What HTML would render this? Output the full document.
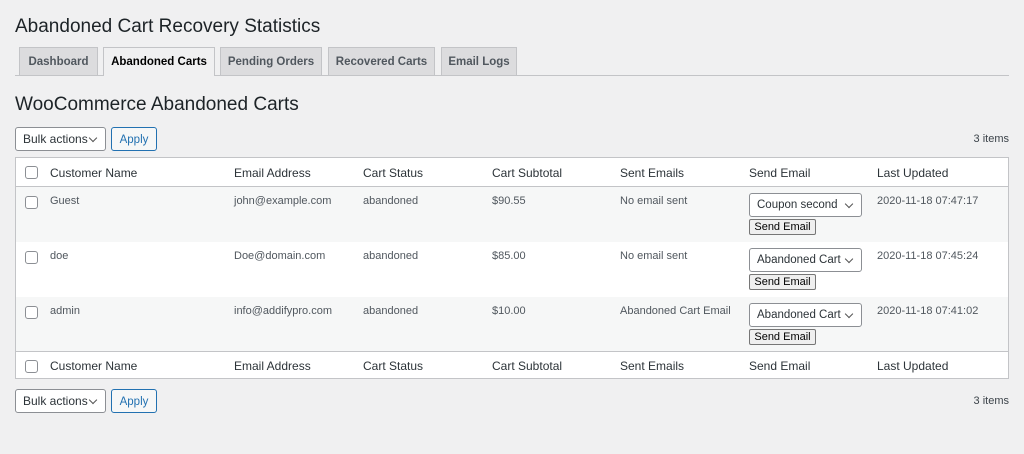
<!DOCTYPE html>
<html><head><style>
*{box-sizing:border-box;margin:0;padding:0}
body{width:1024px;height:454px;background:#f0f0f1;font-family:"Liberation Sans",sans-serif;color:#3c434a;position:relative;overflow:hidden}
.a{position:absolute;white-space:nowrap}
h1{position:absolute;left:15px;top:16px;font-size:19px;font-weight:400;color:#1d2327}
h2{position:absolute;left:15px;top:94px;font-size:19px;font-weight:400;color:#1d2327}
.tabline{position:absolute;left:15px;right:15px;top:75px;border-top:1px solid #c3c4c7}
.tab{position:absolute;top:47px;height:28px;background:#dcdcde;border:1px solid #c3c4c7;border-bottom:none;font-size:11.5px;font-weight:700;color:#50575e;line-height:28px;text-align:center}
.tab.on{background:#f0f0f1;color:#000;height:29px}
.sel{position:absolute;height:24px;background:#fff;border:1px solid #8c8f94;border-radius:3px;font-size:12px;color:#2c3338;line-height:22px;padding-left:7px}
.sel:after{content:"";position:absolute;right:9px;top:7px;width:5px;height:5px;border-right:1.3px solid #555;border-bottom:1.3px solid #555;transform:rotate(45deg)}
.btn{position:absolute;height:24px;border:1px solid #2271b1;border-radius:3px;background:#f6f7f7;color:#2271b1;font-size:11.5px;line-height:24px;text-align:center}
.items{position:absolute;right:15px;font-size:11px;color:#3c434a}
.tbl{position:absolute;left:15px;top:157px;width:994px;height:222px;border:1px solid #c3c4c7;background:#fff}
.row{position:absolute;left:0;width:992px}
.g{background:#f6f7f7}
.hd{border-bottom:1px solid #c3c4c7}
.ft{border-top:1px solid #c3c4c7}
.cb{position:absolute;left:9px;width:13px;height:13px;border:1px solid #8c8f94;border-radius:3px;background:#fff}
.h{font-size:12px;color:#2c3338}
.c{font-size:11px;color:#50575e}
.ss{position:absolute;left:733px;width:113px;height:24px;background:#fff;border:1px solid #8c8f94;border-radius:3px;font-size:11.5px;color:#2c3338;line-height:22px;padding-left:7px}
.ss:after{content:"";position:absolute;right:9px;top:7px;width:5px;height:5px;border-right:1.3px solid #555;border-bottom:1.3px solid #555;transform:rotate(45deg)}
.sb{position:absolute;left:733px;width:67px;height:16px;background:#efefef;border:1px solid #767676;border-radius:2px;font-size:11px;color:#000;line-height:14px;text-align:center}
</style></head><body>
<h1>Abandoned Cart Recovery Statistics</h1>
<div class="tabline"></div>
<div class="tab" style="left:19px;width:79px">Dashboard</div>
<div class="tab on" style="left:103px;width:112px">Abandoned Carts</div>
<div class="tab" style="left:220px;width:102px">Pending Orders</div>
<div class="tab" style="left:328px;width:107px">Recovered Carts</div>
<div class="tab" style="left:441px;width:76px">Email Logs</div>
<h2>WooCommerce Abandoned Carts</h2>
<div class="sel" style="left:15px;top:127px;width:91px">Bulk actions</div>
<div class="btn" style="left:111px;top:127px;width:46px">Apply</div>
<div class="items" style="top:133px">3 items</div>
<div class="tbl">
 <div class="row hd" style="top:0;height:29px">
  <div class="cb" style="top:8px"></div>
  <div class="a h" style="left:34px;top:8px">Customer Name</div><div class="a h" style="left:218px;top:8px">Email Address</div><div class="a h" style="left:347px;top:8px">Cart Status</div><div class="a h" style="left:476px;top:8px">Cart Subtotal</div><div class="a h" style="left:604px;top:8px">Sent Emails</div><div class="a h" style="left:733px;top:8px">Send Email</div><div class="a h" style="left:861px;top:8px">Last Updated</div>
 </div>
 <div class="row g" style="top:29px;height:55px">
  <div class="cb" style="top:9px"></div>
  <div class="a c" style="left:34px;top:8px">Guest</div><div class="a c" style="left:218px;top:8px">john@example.com</div><div class="a c" style="left:347px;top:8px">abandoned</div><div class="a c" style="left:476px;top:8px">$90.55</div><div class="a c" style="left:604px;top:8px">No email sent</div>
  <div class="ss" style="top:6px">Coupon second</div><div class="sb" style="top:32px">Send Email</div>
  <div class="a c" style="left:861px;top:8px">2020-11-18 07:47:17</div>
 </div>
 <div class="row" style="top:84px;height:55px">
  <div class="cb" style="top:9px"></div>
  <div class="a c" style="left:34px;top:8px">doe</div><div class="a c" style="left:218px;top:8px">Doe@domain.com</div><div class="a c" style="left:347px;top:8px">abandoned</div><div class="a c" style="left:476px;top:8px">$85.00</div><div class="a c" style="left:604px;top:8px">No email sent</div>
  <div class="ss" style="top:6px">Abandoned Cart</div><div class="sb" style="top:32px">Send Email</div>
  <div class="a c" style="left:861px;top:8px">2020-11-18 07:45:24</div>
 </div>
 <div class="row g" style="top:139px;height:55px">
  <div class="cb" style="top:9px"></div>
  <div class="a c" style="left:34px;top:8px">admin</div><div class="a c" style="left:218px;top:8px">info@addifypro.com</div><div class="a c" style="left:347px;top:8px">abandoned</div><div class="a c" style="left:476px;top:8px">$10.00</div><div class="a c" style="left:604px;top:8px">Abandoned Cart Email</div>
  <div class="ss" style="top:6px">Abandoned Cart</div><div class="sb" style="top:32px">Send Email</div>
  <div class="a c" style="left:861px;top:8px">2020-11-18 07:41:02</div>
 </div>
 <div class="row ft" style="top:193px;height:27px">
  <div class="cb" style="top:8px"></div>
  <div class="a h" style="left:34px;top:7px">Customer Name</div><div class="a h" style="left:218px;top:7px">Email Address</div><div class="a h" style="left:347px;top:7px">Cart Status</div><div class="a h" style="left:476px;top:7px">Cart Subtotal</div><div class="a h" style="left:604px;top:7px">Sent Emails</div><div class="a h" style="left:733px;top:7px">Send Email</div><div class="a h" style="left:861px;top:7px">Last Updated</div>
 </div>
</div>
<div class="sel" style="left:15px;top:389px;width:91px">Bulk actions</div>
<div class="btn" style="left:111px;top:389px;width:46px">Apply</div>
<div class="items" style="top:395px">3 items</div>
</body></html>
